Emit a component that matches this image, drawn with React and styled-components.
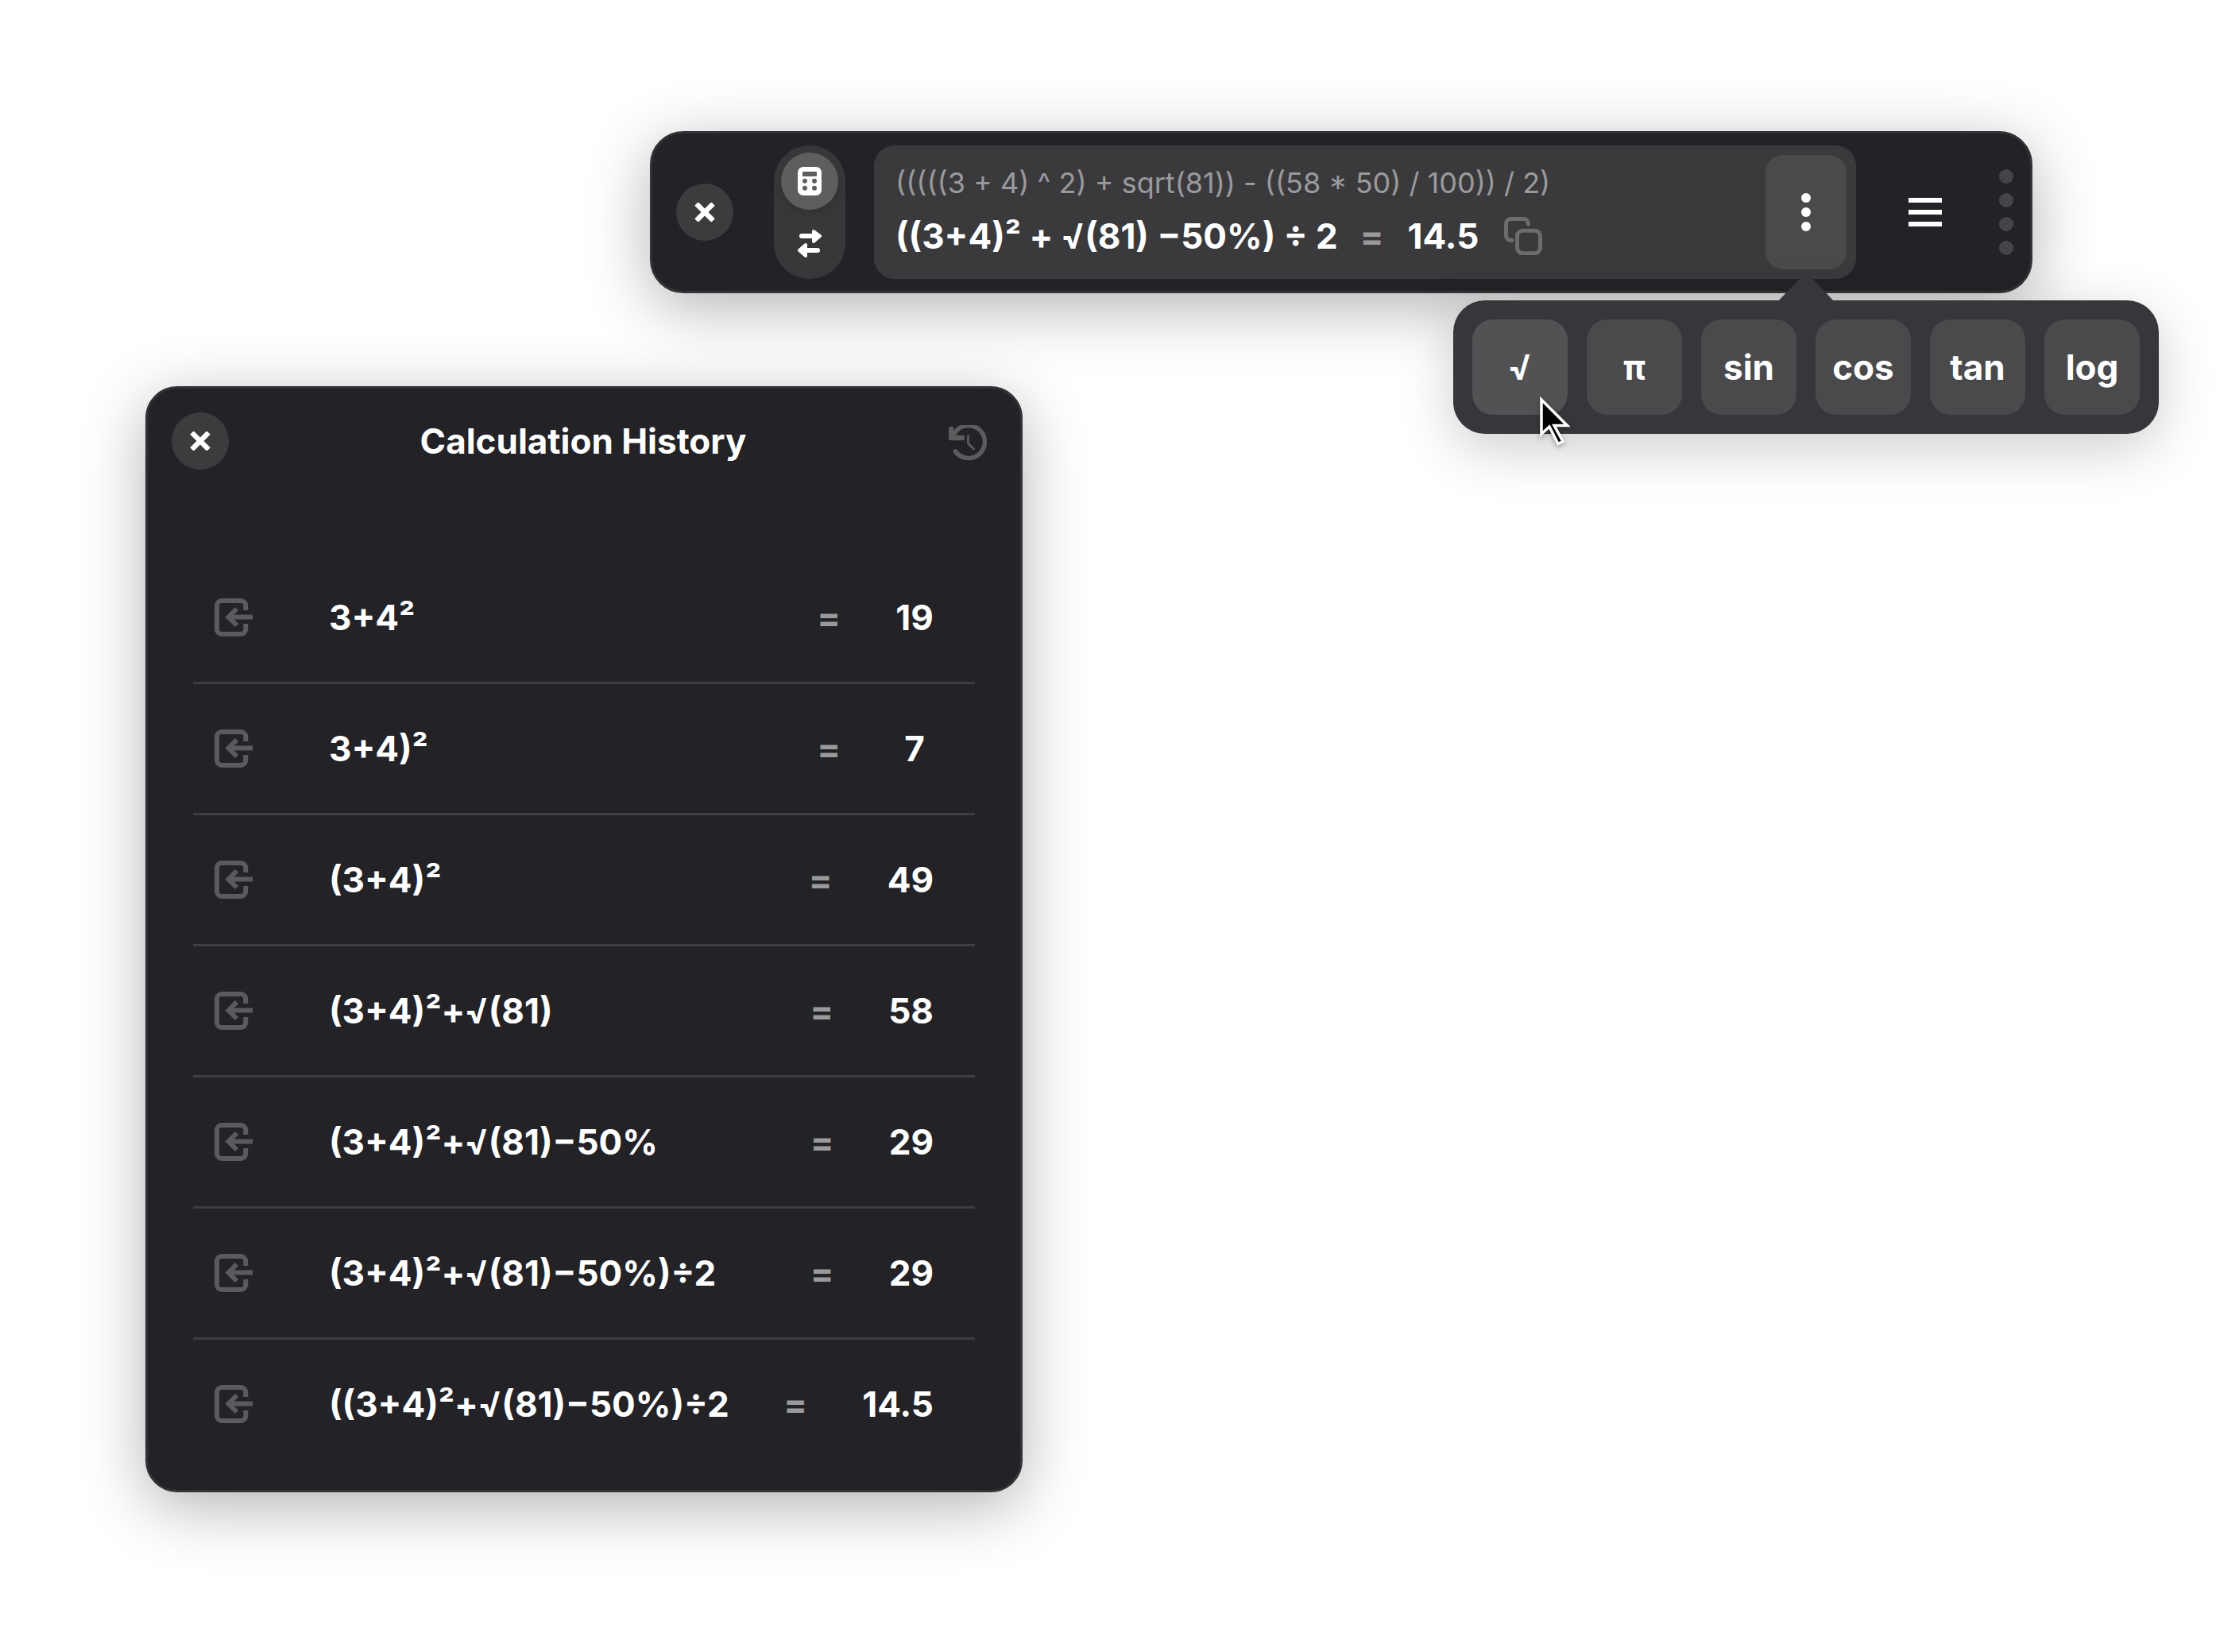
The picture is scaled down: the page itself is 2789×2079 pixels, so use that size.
import React from 'react';
import styled, { createGlobalStyle } from 'styled-components';

const GlobalStyle = createGlobalStyle`
  html, body {
    margin: 0;
    background: #ffffff;
    font-family: 'Inter', 'Liberation Sans', sans-serif;
  }
`;

const Canvas = styled.div`
  position: relative;
  width: 2789px;
  height: 2079px;
  overflow: hidden;
  background: #ffffff;
`;

const Toolbar = styled.div`
  position: absolute;
  left: 818px;
  top: 165px;
  box-sizing: border-box;
  width: 1740px;
  height: 204px;
  display: flex;
  align-items: center;
  padding: 0 20px 0 30px;
  background: #232327;
  border: 3px solid #333337;
  border-radius: 42px;
  box-shadow: 0 18px 80px rgba(0, 0, 0, 0.3);
`;

const CloseButton = styled.div`
  flex: none;
  width: 72px;
  height: 72px;
  display: flex;
  align-items: center;
  justify-content: center;
  border-radius: 50%;
  background: #3c3c3f;
`;

const ModeSwitch = styled.div`
  flex: none;
  box-sizing: border-box;
  width: 90px;
  height: 168px;
  margin: 0 36px 0 51px;
  padding-top: 9px;
  display: flex;
  flex-direction: column;
  align-items: center;
  border-radius: 45px;
  background: #38383b;
`;

const ModeActive = styled.div`
  width: 72px;
  height: 72px;
  display: flex;
  align-items: center;
  justify-content: center;
  border-radius: 50%;
  background: #5e5e60;
  box-shadow: 0 6px 14px rgba(0, 0, 0, 0.12);
`;

const ModeIdle = styled.div`
  margin-top: 24px;
  height: 36px;
  display: flex;
`;

const InputBox = styled.div`
  flex: none;
  box-sizing: border-box;
  width: 1236px;
  height: 168px;
  padding: 12px 12px 12px 27px;
  display: flex;
  align-items: stretch;
  justify-content: space-between;
  border-radius: 26px;
  background: #3a3a3d;
`;

const Expressions = styled.div`
  display: flex;
  flex-direction: column;
  gap: 17px;
  padding-top: 12px;
`;

const RawLine = styled.div`
  font-size: 36px;
  line-height: 46px;
  font-weight: 400;
  color: #9a9a9c;
  white-space: nowrap;
`;

const PrettyLine = styled.div`
  display: flex;
  align-items: center;
  height: 54px;
  font-size: 44px;
  font-weight: 700;
  color: #ffffff;
  white-space: nowrap;
`;

const ToolbarEquals = styled.span`
  margin: 0 30px 0 28px;
  color: #9a9a9c;
`;

const CopyIcon = styled.svg`
  width: 48px;
  height: 48px;
  margin-left: 32px;
  fill: none;
  stroke: #6c6c6f;
  stroke-width: 5;
  stroke-linecap: round;
`;

const MoreButton = styled.div`
  width: 102px;
  height: 144px;
  display: flex;
  flex-direction: column;
  align-items: center;
  justify-content: center;
  gap: 6px;
  border-radius: 22px;
  background: #4a4a4d;
`;

const MoreDot = styled.span`
  width: 12px;
  height: 12px;
  border-radius: 50%;
  background: #ffffff;
`;

const MenuBars = styled.div`
  flex: none;
  width: 42px;
  margin: 0 72px 0 66px;
  display: flex;
  flex-direction: column;
  gap: 9px;
`;

const MenuBar = styled.span`
  height: 6px;
  background: #ffffff;
`;

const Grip = styled.div`
  flex: none;
  display: flex;
  flex-direction: column;
  gap: 12px;
`;

const GripDot = styled.span`
  width: 18px;
  height: 18px;
  border-radius: 50%;
  background: #454548;
`;

const Popover = styled.div`
  position: absolute;
  left: 1829px;
  top: 378px;
  display: flex;
  gap: 24px;
  padding: 24px;
  border-radius: 40px;
  background: #37373b;
  box-shadow: 0 18px 70px rgba(0, 0, 0, 0.2);

  &::before {
    content: '';
    position: absolute;
    left: 409px;
    top: -36px;
    border-left: 35px solid transparent;
    border-right: 35px solid transparent;
    border-bottom: 37px solid #37373b;
  }
`;

const KeyButton = styled.div`
  width: 120px;
  height: 120px;
  display: flex;
  align-items: center;
  justify-content: center;
  border-radius: 26px;
  font-size: 44px;
  font-weight: 700;
  color: #ffffff;
  background: ${(p) => (p.$active ? '#525255' : '#4a4a4d')};
`;

const Pointer = styled.svg`
  position: absolute;
  left: 106px;
  top: 117px;
  width: 46px;
  height: 70px;
  filter: drop-shadow(0 2px 3px rgba(0, 0, 0, 0.35));
`;

const Panel = styled.div`
  position: absolute;
  left: 183px;
  top: 486px;
  box-sizing: border-box;
  width: 1104px;
  height: 1392px;
  background: #232327;
  border: 3px solid #333337;
  border-radius: 40px;
  box-shadow: 0 18px 80px rgba(0, 0, 0, 0.3);
`;

const PanelHeader = styled.div`
  height: 207px;
  box-sizing: border-box;
  padding: 30px 32px 0 30px;
  display: grid;
  grid-template-columns: 1fr auto 1fr;
  align-items: start;
`;

const PanelTitle = styled.div`
  height: 72px;
  line-height: 72px;
  font-size: 44px;
  font-weight: 700;
  color: #ffffff;
`;

const HistoryIcon = styled.svg`
  justify-self: end;
  margin: 16px 10px 0 0;
  width: 48px;
  height: 46px;
  fill: none;
  stroke: #5c5c5e;
`;

const Rows = styled.div`
  margin: 0 57px;
`;

const Row = styled.div`
  box-sizing: border-box;
  height: 165px;
  padding: 0 52px 0 27px;
  display: flex;
  align-items: center;
  font-size: 44px;
  font-weight: 700;
  color: #ffffff;
  border-bottom: 3px solid #3e3e41;

  &:last-child {
    border-bottom: none;
    padding-bottom: 3px;
  }
`;

const RecallIcon = styled.svg`
  flex: none;
  width: 48px;
  height: 48px;
  margin-right: 96px;
  fill: none;
  stroke: #5b5b5d;
  stroke-width: 6;
`;

const Equation = styled.div`
  flex: 1;
  white-space: nowrap;
`;

const Equals = styled.span`
  color: #9a9a9c;
`;

const Result = styled.div`
  min-width: 48px;
  margin-left: 69px;
  text-align: center;
`;

const CloseIcon = () => (
  <svg width="26" height="24" viewBox="0 0 26 24" fill="none" stroke="#fff" strokeWidth="6.4">
    <path d="M2.5 1.5 23.5 22.5M23.5 1.5 2.5 22.5" />
  </svg>
);

const CalculatorIcon = () => (
  <svg width="30" height="36" viewBox="0 0 30 36">
    <rect width="30" height="36" rx="7" fill="#fff" />
    <rect x="6" y="6" width="18" height="6" rx="1" fill="#5e5e60" />
    <circle cx="9" cy="17.7" r="3" fill="#5e5e60" />
    <circle cx="21" cy="17.7" r="3" fill="#5e5e60" />
    <circle cx="9" cy="26.7" r="3" fill="#5e5e60" />
    <circle cx="21" cy="26.7" r="3" fill="#5e5e60" />
  </svg>
);

const SwapIcon = () => (
  <svg width="30" height="36" viewBox="0 0 30 36" fill="#fff" stroke="#fff" strokeLinejoin="round" strokeLinecap="round">
    <path d="M5 9H20" strokeWidth="6" />
    <path d="M20 3 28 9 20 16Z" strokeWidth="4" />
    <path d="M25 27H10" strokeWidth="6" />
    <path d="M10 20 2 27 10 34Z" strokeWidth="4" />
  </svg>
);

const history = [
  ['3+4²', '19'],
  ['3+4)²', '7'],
  ['(3+4)²', '49'],
  ['(3+4)²+√(81)', '58'],
  ['(3+4)²+√(81)−50%', '29'],
  ['(3+4)²+√(81)−50%)÷2', '29'],
  ['((3+4)²+√(81)−50%)÷2', '14.5'],
];

const keys = ['√', 'π', 'sin', 'cos', 'tan', 'log'];

export default function App() {
  return (
    <Canvas>
      <GlobalStyle />

      <Panel>
        <PanelHeader>
          <CloseButton>
            <CloseIcon />
          </CloseButton>
          <PanelTitle>Calculation History</PanelTitle>
          <HistoryIcon viewBox="0 0 48 46">
            <path d="M8.3 33A20.5 20.5 0 1 0 6.5 12" strokeWidth="5.6" strokeLinecap="round" />
            <path d="M3.2 5V16H17" strokeWidth="6.4" strokeLinecap="round" strokeLinejoin="round" />
            <path d="M24.5 14V23L31.5 30" strokeWidth="2.8" strokeLinecap="round" />
          </HistoryIcon>
        </PanelHeader>
        <Rows>
          {history.map(([expr, result]) => (
            <Row key={expr}>
              <RecallIcon viewBox="0 0 48 48">
                <path d="M39.2 15V9a6 6 0 0 0-6-6H9A6 6 0 0 0 3 9V39a6 6 0 0 0 6 6H33.2a6 6 0 0 0 6-6V32" />
                <path d="M48 23.5H18M28 13 17.5 23.5 28 34" />
              </RecallIcon>
              <Equation>{expr}</Equation>
              <Equals>=</Equals>
              <Result>{result}</Result>
            </Row>
          ))}
        </Rows>
      </Panel>

      <Toolbar>
        <CloseButton>
          <CloseIcon />
        </CloseButton>
        <ModeSwitch>
          <ModeActive>
            <CalculatorIcon />
          </ModeActive>
          <ModeIdle>
            <SwapIcon />
          </ModeIdle>
        </ModeSwitch>
        <InputBox>
          <Expressions>
            <RawLine>(((((3 + 4) ^ 2) + sqrt(81)) - ((58 * 50) / 100)) / 2)</RawLine>
            <PrettyLine>
              ((3+4)² + √(81) −50%) ÷ 2
              <ToolbarEquals>=</ToolbarEquals>
              14.5
              <CopyIcon viewBox="0 0 48 48">
                <rect x="16.5" y="17.3" width="29" height="28.5" rx="7" />
                <path d="M10 29.5C5 29.5 2.5 26.5 2.5 23V9C2.5 5 5 2.5 9 2.5H24C28 2.5 30.5 5 30.5 9" />
              </CopyIcon>
            </PrettyLine>
          </Expressions>
          <MoreButton>
            <MoreDot />
            <MoreDot />
            <MoreDot />
          </MoreButton>
        </InputBox>
        <MenuBars>
          <MenuBar />
          <MenuBar />
          <MenuBar />
        </MenuBars>
        <Grip>
          <GripDot />
          <GripDot />
          <GripDot />
          <GripDot />
        </Grip>
      </Toolbar>

      <Popover>
        {keys.map((k, i) => (
          <KeyButton key={k} $active={i === 0}>
            {k}
          </KeyButton>
        ))}
        <Pointer viewBox="0 0 46 70">
          <path
            d="M5 8 37.5 40.5H21L32 60.5 26 63.5 15 42 5 51Z"
            fill="#000"
            stroke="#fff"
            strokeWidth="3.5"
          />
        </Pointer>
      </Popover>
    </Canvas>
  );
}
